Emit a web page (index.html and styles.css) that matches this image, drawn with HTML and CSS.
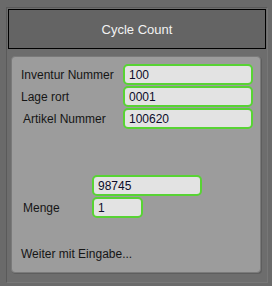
FILE: index.html
```html
<!DOCTYPE html>
<html lang="de">
<head>
    <meta charset="UTF-8">
    <meta name="viewport" content="width=device-width, initial-scale=1.0">
    <title>Cycle Count</title>
    <link rel="stylesheet" href="styles.css">
</head>
<body>
    <div class="frame">
        <div class="header">Cycle Count</div>

        <div class="panel">
            <div class="row">
                <label class="label">Inventur Nummer</label>
                <input class="field wide" type="text" value="100">
            </div>
            <div class="row">
                <label class="label">Lage rort</label>
                <input class="field wide" type="text" value="0001">
            </div>
            <div class="row">
                <label class="label indent">Artikel Nummer</label>
                <input class="field wide" type="text" value="100620">
            </div>

            <div class="qty">
                <div class="row">
                    <span class="label short"></span>
                    <input class="field mid" type="text" value="98745">
                </div>
                <div class="row">
                    <label class="label short indent">Menge</label>
                    <input class="field small" type="text" value="1">
                </div>
            </div>

            <p class="status">Weiter mit Eingabe...</p>
        </div>
    </div>
</body>
</html>
```

FILE: styles.css
```css
body {
    font-family: "Liberation Sans", Arial, sans-serif;
    background-color: #6a6a6a;
    margin: 0;
    padding: 7px 4px 4px 6px;
}

.frame {
    border: 1px solid #5a5a5a;
    border-right-color: #777;
    border-bottom-color: #777;
    background-color: #6d6d6d;
    height: 276px;
    box-sizing: border-box;
    padding: 1px;
}

.header {
    height: 40px;
    box-sizing: border-box;
    border: 1px solid #000;
    background-color: #646464;
    color: #f2f2f2;
    font-size: 13px;
    display: flex;
    align-items: center;
    justify-content: center;
}

.panel {
    margin: 7px 5px 0 3px;
    height: 217px;
    box-sizing: border-box;
    background-color: #9c9c9c;
    border: 1px solid #7a7a7a;
    border-radius: 4px;
    box-shadow: 1px 1px 0 #5e5e5e;
    padding: 7px 0 0 9px;
}

.row {
    display: flex;
    align-items: center;
    margin-bottom: 1px;
}

.label {
    width: 102px;
    font-size: 12px;
    color: #151515;
}

.indent {
    padding-left: 2px;
    box-sizing: border-box;
}

.short {
    width: 71px;
}

.field {
    font-family: "Liberation Sans", Arial, sans-serif;
    font-size: 12px;
    color: #0c0c2a;
    background-color: #e3e3e3;
    border: 2px solid #58d334;
    border-radius: 5px;
    padding: 0 4px;
    margin: 0;
    height: 21px;
    box-sizing: border-box;
    outline: none;
}

.wide {
    width: 130px;
}

.mid {
    width: 110px;
}

.small {
    width: 51px;
}

.qty {
    margin-top: 46px;
}

.status {
    margin: 29px 0 0 0;
    font-size: 12px;
    color: #151515;
}
```
